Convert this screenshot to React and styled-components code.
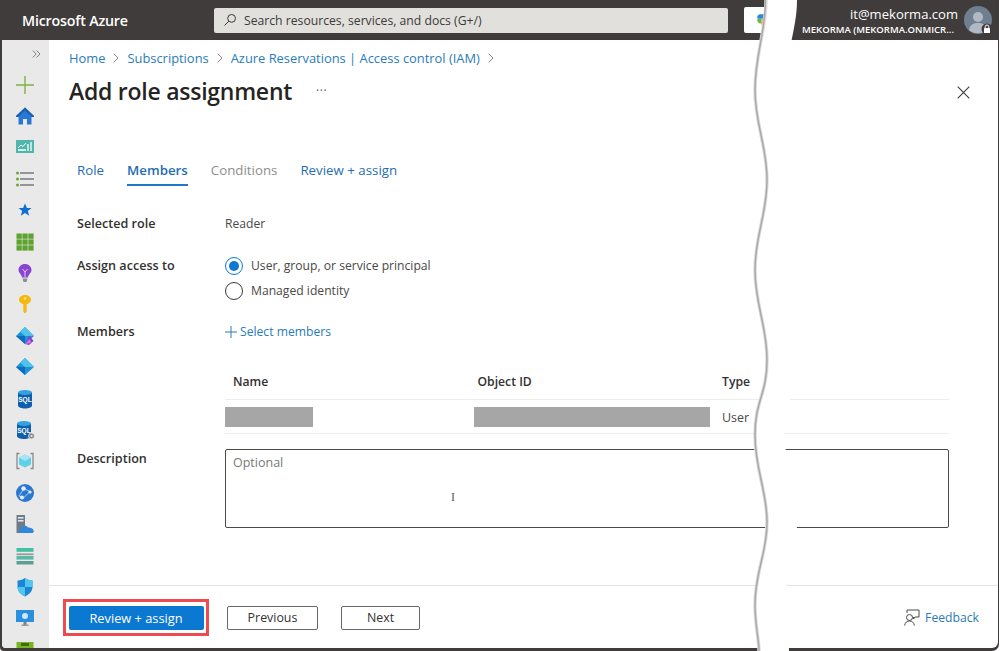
import React from "react";
import styled, { createGlobalStyle } from "styled-components";

const GlobalStyle = createGlobalStyle`
  html, body {
    margin: 0;
    padding: 0;
    background: #fff;
  }
  * {
    box-sizing: border-box;
  }
`;

const Frame = styled.div`
  position: relative;
  width: 1000px;
  height: 651px;
  overflow: hidden;
  background: #fff;
  font-family: "Open Sans", "Noto Sans", sans-serif;
  font-size: 12.5px;
  color: #323130;
`;

const Window = styled.div`
  width: 999px;
  height: 651px;
  display: flex;
  flex-direction: column;
  background: #3f3c3b;
  border-radius: 0 0 7px 4px;
  padding: 0 1px 3px 2px;
`;

const TopBar = styled.header`
  height: 40px;
  flex: none;
  margin: 0 -1px 0 -2px;
  display: flex;
  align-items: center;
  color: #fff;
`;

const Brand = styled.div`
  width: 214px;
  flex: none;
  padding-left: 22px;
  font-size: 14.25px;
  font-weight: 600;
  letter-spacing: -0.2px;
`;

const SearchBox = styled.div`
  width: 514px;
  height: 25px;
  flex: none;
  display: flex;
  align-items: center;
  gap: 7px;
  padding-left: 9px;
  background: #e2e0dd;
  border-radius: 2px;
  color: #3b3a39;
  font-size: 12.2px;
`;

const CopilotButton = styled.div`
  width: 30px;
  height: 26px;
  flex: none;
  margin-left: 16px;
  display: flex;
  align-items: center;
  padding-left: 12px;
  background: #fff;
  border-radius: 2px;
`;

const Account = styled.div`
  margin-left: auto;
  display: flex;
  align-items: center;
  gap: 6px;
  padding: 1px 6px 0 0;
`;

const AccountText = styled.div`
  text-align: right;
`;

const AccountMail = styled.div`
  font-size: 13.05px;
  line-height: 17px;
`;

const AccountTenant = styled.div`
  font-size: 9.5px;
  font-weight: 600;
  line-height: 12px;
  margin-top: 1px;
  padding-right: 4px;
`;

const Body = styled.div`
  flex: 1;
  min-height: 0;
  display: flex;
  background: #fff;
  border-radius: 0 0 6px 4px;
  overflow: hidden;
`;

const Sidebar = styled.nav`
  width: 47px;
  flex: none;
  padding-top: 2px;
  background: #e9e9e9;
  overflow: hidden;
`;

const Collapse = styled.div`
  height: 24px;
  margin-bottom: 3px;
  display: flex;
  align-items: center;
  justify-content: flex-end;
  padding-right: 8px;
`;

const NavSlot = styled.div`
  height: 31.4px;
  display: flex;
  align-items: center;
  justify-content: center;
  padding-right: 2px;
`;

const Main = styled.main`
  flex: 1;
  min-width: 0;
  display: flex;
  flex-direction: column;
`;

const Breadcrumb = styled.div`
  height: 20px;
  margin: 8px 0 0 20px;
  display: flex;
  align-items: center;
  gap: 8px;
  font-size: 12.9px;
`;

const Crumb = styled.span`
  color: #2a7cb8;
`;

const TitleRow = styled.div`
  height: 32px;
  margin: 7px 0 0 20px;
  padding-right: 28px;
  display: flex;
  align-items: center;
`;

const Title = styled.h1`
  margin: 0;
  font-size: 23px;
  font-weight: 600;
  letter-spacing: -0.25px;
  color: #252423;
`;

const Ellipsis = styled.span`
  margin-left: 24px;
  margin-bottom: 1px;
  font-size: 12px;
  letter-spacing: 0.5px;
  color: #605e5c;
`;

const CloseButton = styled.span`
  margin: 2px 0 0 auto;
  display: flex;
`;

const Tabs = styled.div`
  height: 28px;
  margin: 51px 0 0 28px;
  display: flex;
  gap: 23px;
`;

const Tab = styled.span`
  height: 28px;
  padding-top: 2px;
  font-size: 13.3px;
  line-height: 20px;
  font-weight: ${(p) => (p.$active ? 600 : 400)};
  color: ${(p) => (p.$disabled ? "#8f8e8d" : "#1f6db3")};
  border-bottom: 2px solid ${(p) => (p.$active ? "#1f78c8" : "transparent")};
`;

const Form = styled.div`
  margin: 28px 49px 0 28px;
  display: grid;
  grid-template-columns: 148px 1fr;
`;

const Label = styled.div`
  font-weight: 600;
  font-size: 12.6px;
  line-height: 20px;
  color: #323130;
  margin-top: ${(p) => p.$top || 0}px;
`;

const Value = styled.div`
  font-size: 12.15px;
  line-height: 20px;
  margin-top: ${(p) => p.$top || 0}px;
  color: #4a4847;
`;

const RadioRow = styled.div`
  display: flex;
  align-items: center;
  gap: 8px;
  height: 20px;
  margin-bottom: 5px;
  color: #4a4847;
`;

const Radio = styled.span`
  width: 18px;
  height: 18px;
  border-radius: 50%;
  display: flex;
  align-items: center;
  justify-content: center;
  border: 1.5px solid ${(p) => (p.$checked ? "#0f78d4" : "#3b3a39")};
  &::after {
    content: "";
    width: 10px;
    height: 10px;
    border-radius: 50%;
    background: ${(p) => (p.$checked ? "#0f78d4" : "transparent")};
  }
`;

const AddLink = styled.div`
  display: flex;
  align-items: center;
  gap: 3px;
  color: #2a7cb8;
`;

const TableWrap = styled.div`
  grid-column: 2;
  margin-top: 22px;
`;

const TableRow = styled.div`
  display: grid;
  grid-template-columns: 244.5px 244.5px 1fr;
  align-items: center;
  height: ${(p) => (p.$head ? 36 : 34)}px;
  border-bottom: 1px solid #eeeded;
`;

const HeadCell = styled.div`
  padding-left: 8px;
  font-weight: 600;
  font-size: 12.2px;
  color: #323130;
`;

const Cell = styled.div`
  padding: 1px 0 0 8px;
  color: #4a4847;
`;

const Redacted = styled.div`
  height: 20px;
  margin-top: 1px;
  width: ${(p) => p.$width}px;
  margin-left: ${(p) => p.$left || 0}px;
  background: #a6a6a6;
`;

const DescriptionBox = styled.div`
  position: relative;
  height: 79px;
  margin-top: 15px;
  padding: 3px 7px;
  border: 1.5px solid #4b4a49;
  border-radius: 2px;
  line-height: 20px;
  color: #7a7877;
`;

const TextCursor = styled.span`
  position: absolute;
  left: 225px;
  top: 37px;
  font-family: "Liberation Serif", serif;
  font-size: 12px;
  color: #5a5a5a;
`;

const Footer = styled.footer`
  margin-top: auto;
  height: 63px;
  flex: none;
  display: flex;
  align-items: center;
  padding: 1px 19px 0 19px;
  border-top: 1px solid #e6e5e5;
`;

const PrimaryWrap = styled.div`
  padding: 3.500px 2.500px;
  margin-left: -5px;
  border: 3px solid #ee4a50;
  display: flex;
`;

const Button = styled.button`
  height: 24px;
  width: ${(p) => p.$width}px;
  margin-left: ${(p) => p.$gap || 0}px;
  font-family: inherit;
  font-size: ${(p) => (p.$primary ? 12.8 : 12.4)}px;
  font-weight: 500;
  border-radius: 2px;
  padding: 0;
  color: ${(p) => (p.$primary ? "#fff" : "#323130")};
  background: ${(p) => (p.$primary ? "#0b78d2" : "#fff")};
  border: ${(p) => (p.$primary ? "none" : "1.5px solid #6a6867")};
`;

const Feedback = styled.div`
  margin-left: auto;
  display: flex;
  align-items: center;
  gap: 5px;
  font-size: 12.2px;
  color: #2a7cb8;
`;

const TearOverlay = styled.svg`
  position: absolute;
  left: 0;
  top: 0;
  pointer-events: none;
`;

const tearEdge =
  "C766 30 755 55 755 90 C755 125 767 145 767 180 C767 215 755 235 755 270 C755 305 767 325 767 360 C767 395 755 400 755 435 C755 470 767 490 767 522 C767 555 755 570 755 605 C755 625 759 640 759 651";

const Tear = () => (
  <TearOverlay width="1000" height="651" viewBox="0 0 1000 651">
    <path
      d={`M766 0 ${tearEdge} L789 651 C789 640 785 625 785 605 C785 570 797 555 797 522 C797 490 785 470 785 435 C785 400 797 395 797 360 C797 325 785 305 785 270 C785 235 797 215 797 180 C797 145 785 125 785 90 C785 55 797 30 797 0 Z`}
      fill="#fff"
    />
    <path d={`M766 0 ${tearEdge}`} fill="none" stroke="#dcdcdc" strokeWidth="3.4" />
    <path d={`M765.4 0 ${tearEdge}`} fill="none" stroke="#a9a9a9" strokeWidth="1.5" />
  </TearOverlay>
);

const SearchIcon = () => (
  <svg width="14" height="14" viewBox="0 0 14 14" fill="none" stroke="#3b3a39" strokeWidth="1">
    <circle cx="8.6" cy="5.4" r="3.9" />
    <path d="M5.8 8.2 1.5 12.5" />
  </svg>
);

const CopilotIcon = () => (
  <svg width="14" height="14" viewBox="0 0 12 12">
    <path d="M1 4 Q1 1 4 1 L9 1 L7 5 L2 5Z" fill="#2b88d8" />
    <path d="M1 5 L5 5 L4 9 Q1 9 1 5Z" fill="#5cb85c" />
    <path d="M4 9 L5.5 11 L8 6 L5 5Z" fill="#f7a823" />
    <path d="M7 5 L9 1 L11 1 L9 6Z" fill="#e0457b" />
  </svg>
);

const Avatar = () => (
  <svg width="29" height="29" viewBox="0 0 29 29">
    <circle cx="14" cy="14" r="14" fill="#6f7f90" />
    <circle cx="14" cy="11" r="5" fill="#b1bac4" />
    <path d="M5 24 C6 18 10 17 14 17 C18 17 22 18 23 24 A14 14 0 0 1 5 24Z" fill="#b1bac4" />
    <circle cx="23" cy="23" r="5.5" fill="#3f3c3b" />
    <rect x="20" y="22" width="6" height="5" rx="0.6" fill="#fff" />
    <path d="M21.2 22 V20.8 A1.8 1.8 0 0 1 24.8 20.8 V22" fill="none" stroke="#fff" strokeWidth="1" />
  </svg>
);

const CloseIcon = () => (
  <svg width="13" height="13" viewBox="0 0 13 13" stroke="#3b3a39" strokeWidth="1.1">
    <path d="M.7.7 12.3 12.3M12.3.7.7 12.3" />
  </svg>
);

const PlusIcon = () => (
  <svg width="12" height="12" viewBox="0 0 12 12" stroke="#2a7cb8" strokeWidth="1">
    <path d="M6 0V12M0 6H12" />
  </svg>
);

const FeedbackIcon = () => (
  <svg width="16" height="17" viewBox="0 0 16 17" fill="none" stroke="#4a4847" strokeWidth="1">
    <circle cx="5.5" cy="8.5" r="3" />
    <path d="M.6 16.5C1 13.5 3 12 5.5 12S10 13.5 10.4 16.5" />
    <path d="M3 4V1H15V8H11L9.5 10V8" />
  </svg>
);

const Chevrons = () => (
  <svg width="9" height="8" viewBox="0 0 9 8" fill="none" stroke="#777" strokeWidth="0.9">
    <path d="M.8.5 4.2 4 .8 7.5M4.6.5 8 4 4.6 7.5" />
  </svg>
);

const Db = ({ gear }) => (
  <svg width="20" height="20" viewBox="0 0 20 20">
    <path
      d={gear ? "M2 3.5V16C2 18 5.5 19 9 19S16 18 16 16V3.5Z" : "M3 3.5V16.5C3 18.3 6.5 19.5 10 19.5S17 18.3 17 16.5V3.5Z"}
      fill="#0f5fb0"
    />
    <ellipse cx={gear ? 9 : 10} cy="3.5" rx="7" ry="2.5" fill="#35a2e0" />
    <text
      x={gear ? 9 : 10}
      y="13.4"
      textAnchor="middle"
      fontSize="6.6"
      fontWeight="700"
      fontFamily="Liberation Sans, sans-serif"
      fill="#fff"
    >
      SQL
    </text>
    {gear && <circle cx="16.5" cy="16" r="3" fill="#8b8b8b" stroke="#e9e9e9" strokeWidth="0.8" />}
    {gear && <circle cx="16.5" cy="16" r="1" fill="#e9e9e9" />}
  </svg>
);

const Diamond = ({ purple }) => (
  <svg width="20" height="20" viewBox="0 0 20 20">
    <path d="M10 1 19 10 10 18 1 10Z" fill="#1b93d8" />
    <path d="M10 1 19 10 10 10 5 5.5Z" fill="#4fc3ea" />
    <path d="M1 10 10 10 10 18Z" fill="#0f6cbd" />
    {purple && <path d="M10 18 14.5 9.5 18.5 15 14 19Z" fill="#8a3fc6" />}
    {purple && <path d="M10 18 14.5 13 16.5 17Z" fill="#c479e8" />}
  </svg>
);

const navIcons = [
  <svg width="20" height="20" viewBox="0 0 20 20" stroke="#7fb23e" strokeWidth="1.4" key="plus">
    <path d="M10 1V19M1 10H19" />
  </svg>,
  <svg width="20" height="20" viewBox="0 0 20 20" key="home">
    <path d="M10 1.5 1 10V11H3.5V18.5H8V13H12V18.5H16.5V11H19V10Z" fill="#2a78d6" />
    <path d="M10 1.5 1 10V11H3L10 4.5 17 11H19V10Z" fill="#1a5fae" />
  </svg>,
  <svg width="20" height="20" viewBox="0 0 20 20" key="monitor">
    <rect x="1" y="3" width="18" height="13" fill="#50b5ac" />
    <path d="M3 11 6 8 8 9.5 11 6" fill="none" stroke="#fff" strokeWidth="1" />
    <path d="M3 13H11M13 14V7M16 14V5" stroke="#fff" strokeWidth="1.3" />
  </svg>,
  <svg width="20" height="20" viewBox="0 0 20 20" key="list">
    <path d="M5 4H19M5 10H19M5 16H19" stroke="#7a7a7a" strokeWidth="1.3" />
    <circle cx="2.5" cy="4" r="1.5" fill="#6ea632" />
    <circle cx="2.5" cy="10" r="1.5" fill="#6ea632" />
    <circle cx="2.5" cy="16" r="1.5" fill="#6ea632" />
  </svg>,
  <svg width="20" height="20" viewBox="0 0 20 20" key="star">
    <path d="M10 3.5 11.9 8H16.5L12.8 11 14.2 15.7 10 13 5.8 15.7 7.2 11 3.5 8H8.1Z" fill="#0f6fd0" />
  </svg>,
  <svg width="20" height="20" viewBox="0 0 20 20" key="grid" fill="#5ea22f">
    <rect x="1.5" y="1.5" width="5.3" height="5.3" />
    <rect x="7.4" y="1.5" width="5.3" height="5.3" />
    <rect x="13.3" y="1.5" width="5.3" height="5.3" />
    <rect x="1.5" y="7.4" width="5.3" height="5.3" />
    <rect x="7.4" y="7.4" width="5.3" height="5.3" />
    <rect x="13.3" y="7.4" width="5.3" height="5.3" />
    <rect x="1.5" y="13.3" width="5.3" height="5.3" />
    <rect x="7.4" y="13.3" width="5.3" height="5.3" />
    <rect x="13.3" y="13.3" width="5.3" height="5.3" />
  </svg>,
  <svg width="20" height="20" viewBox="0 0 20 20" key="bulb">
    <path d="M10 1C6.3 1 3.5 3.7 3.5 7 3.5 10 6.5 11 7 14.5H13C13.5 11 16.5 10 16.5 7 16.5 3.7 13.7 1 10 1Z" fill="#8a45d0" />
    <path d="M7.5 6 10 9 12.5 6M10 9V14" fill="none" stroke="#e6d2f7" strokeWidth="0.9" />
    <path d="M7.5 15.5H12.5L11.5 19H8.5Z" fill="#8d8d8d" />
  </svg>,
  <svg width="20" height="20" viewBox="0 0 20 20" key="key">
    <path d="M10 1C7 1 4 3 4 5.8 4 8 6 9.5 8.3 10.2V17.5L10 19.5 11.7 17.5V10.2C14 9.5 16 8 16 5.8 16 3 13 1 10 1Z" fill="#f5b90f" />
    <circle cx="10" cy="4.5" r="1.2" fill="#ffe48a" />
  </svg>,
  <Diamond purple key="d1" />,
  <Diamond key="d2" />,
  <Db key="s1" />,
  <Db gear key="s2" />,
  <svg width="20" height="20" viewBox="0 0 20 20" key="cube">
    <path d="M4.5 2.5H2V17.5H4.5M15.5 2.5H18V17.5H15.5" fill="none" stroke="#8a8a8a" strokeWidth="1.3" />
    <path d="M10 3.5 16 6.5V13.5L10 16.5 4 13.5V6.5Z" fill="#5fd0ea" />
    <path d="M10 10 16 6.5 10 3.5 4 6.5Z" fill="#a3e6f5" />
  </svg>,
  <svg width="20" height="20" viewBox="0 0 20 20" key="globe">
    <circle cx="10" cy="10" r="9" fill="#2b77d0" />
    <path d="M4 13 9 5.5 15 8.5 8 15.5Z" fill="none" stroke="#cfe3f7" strokeWidth="0.8" />
    <circle cx="8.5" cy="5.5" r="2.2" fill="#e6f1fb" />
    <circle cx="15" cy="9" r="1.6" fill="#e6f1fb" />
    <circle cx="7" cy="14.5" r="2" fill="#e6f1fb" />
  </svg>,
  <svg width="20" height="20" viewBox="0 0 20 20" key="server">
    <rect x="1.5" y="1" width="8.5" height="18" fill="#6e7b88" />
    <rect x="3" y="3" width="5.5" height="1.6" fill="#dfe6ec" />
    <rect x="3" y="6" width="5.5" height="1.6" fill="#dfe6ec" />
    <path d="M6 19C3.5 19 3 15 6.5 14.5 7 11.5 11.5 10.5 13 13.5 16.5 12.8 18.8 15.5 18.8 17 18.8 18.4 18 19 16.5 19Z" fill="#3187dc" />
  </svg>,
  <svg width="20" height="20" viewBox="0 0 20 20" key="stack">
    <rect x="1.5" y="2" width="17" height="3.8" fill="#43bfa5" />
    <rect x="1.5" y="7.4" width="17" height="1.6" fill="#9a9a9a" />
    <rect x="1.5" y="9.8" width="17" height="3.8" fill="#5bb8a6" />
    <rect x="1.5" y="15" width="17" height="3.5" fill="#5f9e94" />
  </svg>,
  <svg width="20" height="20" viewBox="0 0 20 20" key="shield">
    <path d="M10 1C8 2.7 5.5 3.3 2.5 3.5V10C2.5 14.5 6 17.5 10 19.5 14 17.5 17.5 14.5 17.5 10V3.5C14.5 3.3 12 2.7 10 1Z" fill="#1c86d6" />
    <path d="M10 1C12 2.7 14.5 3.3 17.5 3.5V10H10Z" fill="#52c5ec" />
    <path d="M10 10H2.5C2.5 14.5 6 17.5 10 19.5Z" fill="#52c5ec" />
  </svg>,
  <svg width="20" height="20" viewBox="0 0 20 20" key="vm">
    <rect x="1" y="2" width="18" height="12" fill="#2b8fe0" />
    <circle cx="10" cy="8" r="3" fill="#cdeaf8" />
    <rect x="8.5" y="14" width="3" height="3" fill="#808080" />
    <rect x="6.5" y="16.5" width="7" height="1.5" fill="#9a9a9a" />
  </svg>,
  <svg width="20" height="20" viewBox="0 0 20 20" key="green">
    <rect x="1.5" y="2" width="17" height="14" fill="#7ab51d" />
    <rect x="6" y="3" width="8" height="3" fill="#3e6d10" />
  </svg>,
];

function ChevronRight() {
  return (
    <svg width="6" height="10" viewBox="0 0 6 10" fill="none" stroke="#7a7877" strokeWidth="0.9">
      <path d="M.8.7 5 5 .8 9.3" />
    </svg>
  );
}

const App = () => (
  <Frame>
    <GlobalStyle />
    <Window>
      <TopBar>
        <Brand>Microsoft Azure</Brand>
        <SearchBox>
          <SearchIcon />
          <span>Search resources, services, and docs (G+/)</span>
        </SearchBox>
        <CopilotButton>
          <CopilotIcon />
        </CopilotButton>
        <Account>
          <AccountText>
            <AccountMail>it@mekorma.com</AccountMail>
            <AccountTenant>MEKORMA (MEKORMA.ONMICR...</AccountTenant>
          </AccountText>
          <Avatar />
        </Account>
      </TopBar>
      <Body>
        <Sidebar>
          <Collapse>
            <Chevrons />
          </Collapse>
          {navIcons.map((icon) => (
            <NavSlot key={icon.key}>{icon}</NavSlot>
          ))}
        </Sidebar>
        <Main>
          <Breadcrumb>
            <Crumb>Home</Crumb>
            <ChevronRight />
            <Crumb>Subscriptions</Crumb>
            <ChevronRight />
            <Crumb>Azure Reservations | Access control (IAM)</Crumb>
            <ChevronRight />
          </Breadcrumb>
          <TitleRow>
            <Title>Add role assignment</Title>
            <Ellipsis>···</Ellipsis>
            <CloseButton>
              <CloseIcon />
            </CloseButton>
          </TitleRow>
          <Tabs>
            <Tab>Role</Tab>
            <Tab $active>Members</Tab>
            <Tab $disabled>Conditions</Tab>
            <Tab>Review + assign</Tab>
          </Tabs>
          <Form>
            <Label>Selected role</Label>
            <Value>Reader</Value>
            <Label $top={22}>Assign access to</Label>
            <Value $top={22}>
              <RadioRow>
                <Radio $checked />
                User, group, or service principal
              </RadioRow>
              <RadioRow>
                <Radio />
                Managed identity
              </RadioRow>
            </Value>
            <Label $top={16}>Members</Label>
            <Value $top={16}>
              <AddLink>
                <PlusIcon />
                Select members
              </AddLink>
            </Value>
            <TableWrap>
              <TableRow $head>
                <HeadCell>Name</HeadCell>
                <HeadCell>Object ID</HeadCell>
                <HeadCell>Type</HeadCell>
              </TableRow>
              <TableRow>
                <Redacted $width={88} />
                <Redacted $width={236} $left={4} />
                <Cell>User</Cell>
              </TableRow>
            </TableWrap>
            <Label $top={15}>Description</Label>
            <DescriptionBox>
              Optional
              <TextCursor>I</TextCursor>
            </DescriptionBox>
          </Form>
          <Footer>
            <PrimaryWrap>
              <Button $primary $width={135}>Review + assign</Button>
            </PrimaryWrap>
            <Button $width={91} $gap={18}>Previous</Button>
            <Button $width={79} $gap={23}>Next</Button>
            <Feedback>
              <FeedbackIcon />
              Feedback
            </Feedback>
          </Footer>
        </Main>
      </Body>
    </Window>
    <Tear />
  </Frame>
);

export default App;
